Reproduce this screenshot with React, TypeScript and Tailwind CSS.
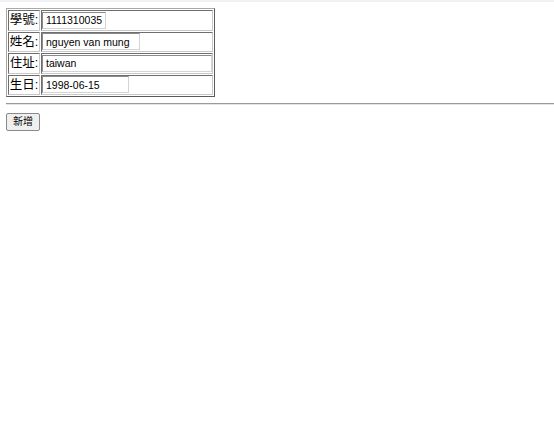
import React from 'react';

const rows = [
  { label: '學號', value: '1111310035', w: 'w-[64px]' },
  { label: '姓名', value: 'nguyen van mung', w: 'w-[98px]' },
  { label: '住址', value: 'taiwan', w: 'w-[170px]' },
  { label: '生日', value: '1998-06-15', w: 'w-[87px]' },
];

const font = "font-['Liberation_Sans','Noto_Sans_CJK_TC',sans-serif]";

const App: React.FC = () => {
  return (
    <div className={`min-h-screen bg-white text-black ${font}`}>
      <div className="h-[2px] bg-[#f0f0f5]" />

      <div className="pl-[6px] pt-[6px]">
        <table className="border-separate border-spacing-[1.5px] border border-t-[#a8a8a8] border-l-[#a8a8a8] border-b-[#5a5a5a] border-r-[#5a5a5a]">
          <tbody>
            {rows.map((r) => (
              <tr key={r.label}>
                <td className="h-[20px] w-[31px] p-[0.75px] border border-t-[#6e6e6e] border-l-[#6e6e6e] border-b-[#c8c8c8] border-r-[#c8c8c8] text-[12.5px] leading-[14px] whitespace-nowrap align-middle">
                  {r.label}:
                </td>
                <td className="h-[20px] w-[172px] py-[0.75px] px-0 border border-t-[#6e6e6e] border-l-[#6e6e6e] border-b-[#c8c8c8] border-r-[#c8c8c8] align-middle">
                  <input
                    type="text"
                    defaultValue={r.value}
                    className={`${r.w} block h-[17px] border-[1.5px] border-t-[#8a8a8a] border-l-[#8a8a8a] border-b-[#d4d4d4] border-r-[#d4d4d4] bg-white px-[3px] text-[10.5px] leading-[13px] text-black outline-none`}
                  />
                </td>
              </tr>
            ))}
          </tbody>
        </table>
      </div>

      <hr className="ml-[6px] mt-[5.5px] h-0 border-0 border-t border-b border-t-[#9a9a9a] border-b-[#e4e4e4]" />

      <div className="pl-[6px] pt-[3px]">
        <button className="h-[18px] w-[34px] rounded-[2px] border border-[#8a8a8a] bg-[#efefef] text-[10px] leading-[12px] text-black">
          新增
        </button>
      </div>
    </div>
  );
};

export default App;
